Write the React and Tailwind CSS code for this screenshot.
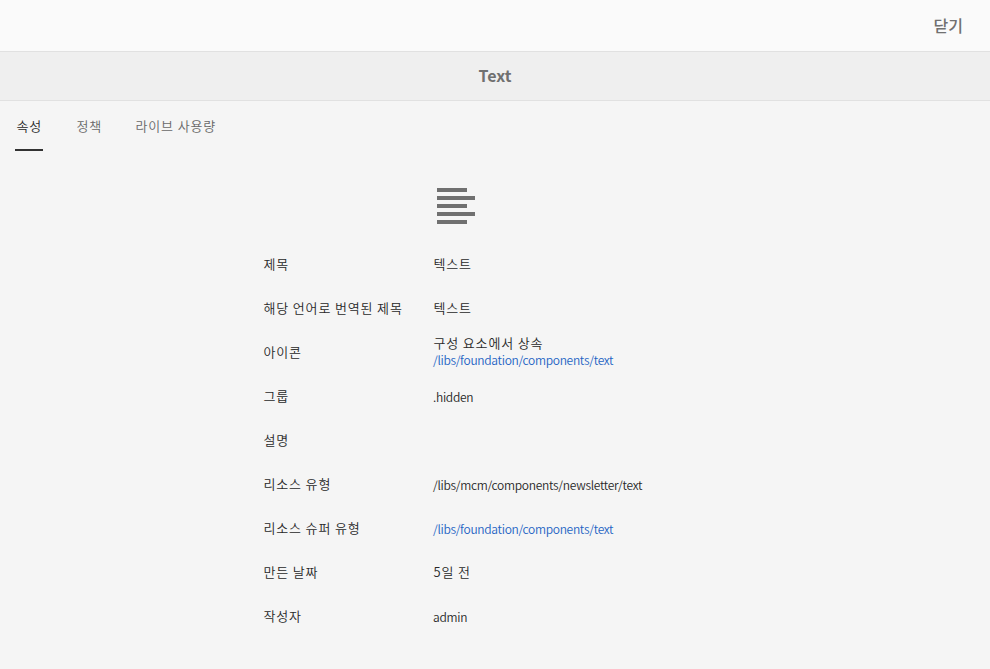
const rows = [
  { label: '제목', value: '텍스트' },
  { label: '해당 언어로 번역된 제목', value: '텍스트' },
  { label: '아이콘', value: '구성 요소에서 상속', link: '/libs/foundation/components/text' },
  { label: '그룹', value: '.hidden', latin: true },
  { label: '설명' },
  { label: '리소스 유형', value: '/libs/mcm/components/newsletter/text', latin: true },
  { label: '리소스 슈퍼 유형', link: '/libs/foundation/components/text' },
  { label: '만든 날짜', value: '5일 전' },
  { label: '작성자', value: 'admin', latin: true },
];

function valuePadding(row) {
  if (row.value && row.link) return 'pb-[3px]';
  return row.latin || row.link ? '' : 'pb-px';
}

export default function App() {
  return (
    <div className="h-[669px] w-[990px] overflow-hidden bg-[#f5f5f5] font-['Noto_Sans_CJK_KR',sans-serif] text-[13px] font-[350] tracking-[0.85px] text-[#282828]">
      <header className="flex h-[52px] items-center justify-end border-b border-[#e1e1e1] bg-[#fafafa] pr-[27px] pb-0.5">
        <button className="text-[16px] leading-6 font-medium tracking-normal text-[#707070]">닫기</button>
      </header>
      <div className="flex h-[49px] items-center justify-center border-b border-[#e1e1e1] bg-[#efefef] pb-0.5">
        <h1 className="text-[16px] leading-6 font-bold tracking-normal text-[#707070]">Text</h1>
      </div>
      <nav className="flex h-[50px] gap-8 pl-[15px] text-[#686868]">
        <a className="w-7 border-b-2 border-[#323232] pt-[15px] pl-[1.5px] leading-5 whitespace-nowrap text-[#282828]">속성</a>
        <a className="w-[27px] pt-[15px] pl-[1.5px] leading-5 whitespace-nowrap">정책</a>
        <a className="pt-[15px] pl-[1.5px] leading-5">라이브 사용량</a>
      </nav>
      <main className="pt-[37px] pl-[263px]">
        <svg className="ml-[174px] h-9 w-[38px]" viewBox="0 0 38 36" fill="#707070">
          <path d="M0 0h30v4H0zM0 8h38v4H0zM0 16h30v4H0zM0 24h38v4H0zM0 32h30v4H0z" />
        </svg>
        <dl className="mt-[18px]">
          {rows.map((row) => (
            <div key={row.label} className="flex h-11 items-center">
              <dt className="w-[170px] pl-[0.4px] leading-4">{row.label}</dt>
              <dd className={`flex flex-col leading-[17px] ${valuePadding(row)}`}>
                {row.value && (
                  <span className={row.latin ? 'text-[12px] tracking-[-0.28px]' : 'pl-[0.4px]'}>{row.value}</span>
                )}
                {row.link && (
                  <a className="text-[12px] tracking-[-0.3px] text-[#2464c4]">{row.link}</a>
                )}
              </dd>
            </div>
          ))}
        </dl>
      </main>
    </div>
  );
}
